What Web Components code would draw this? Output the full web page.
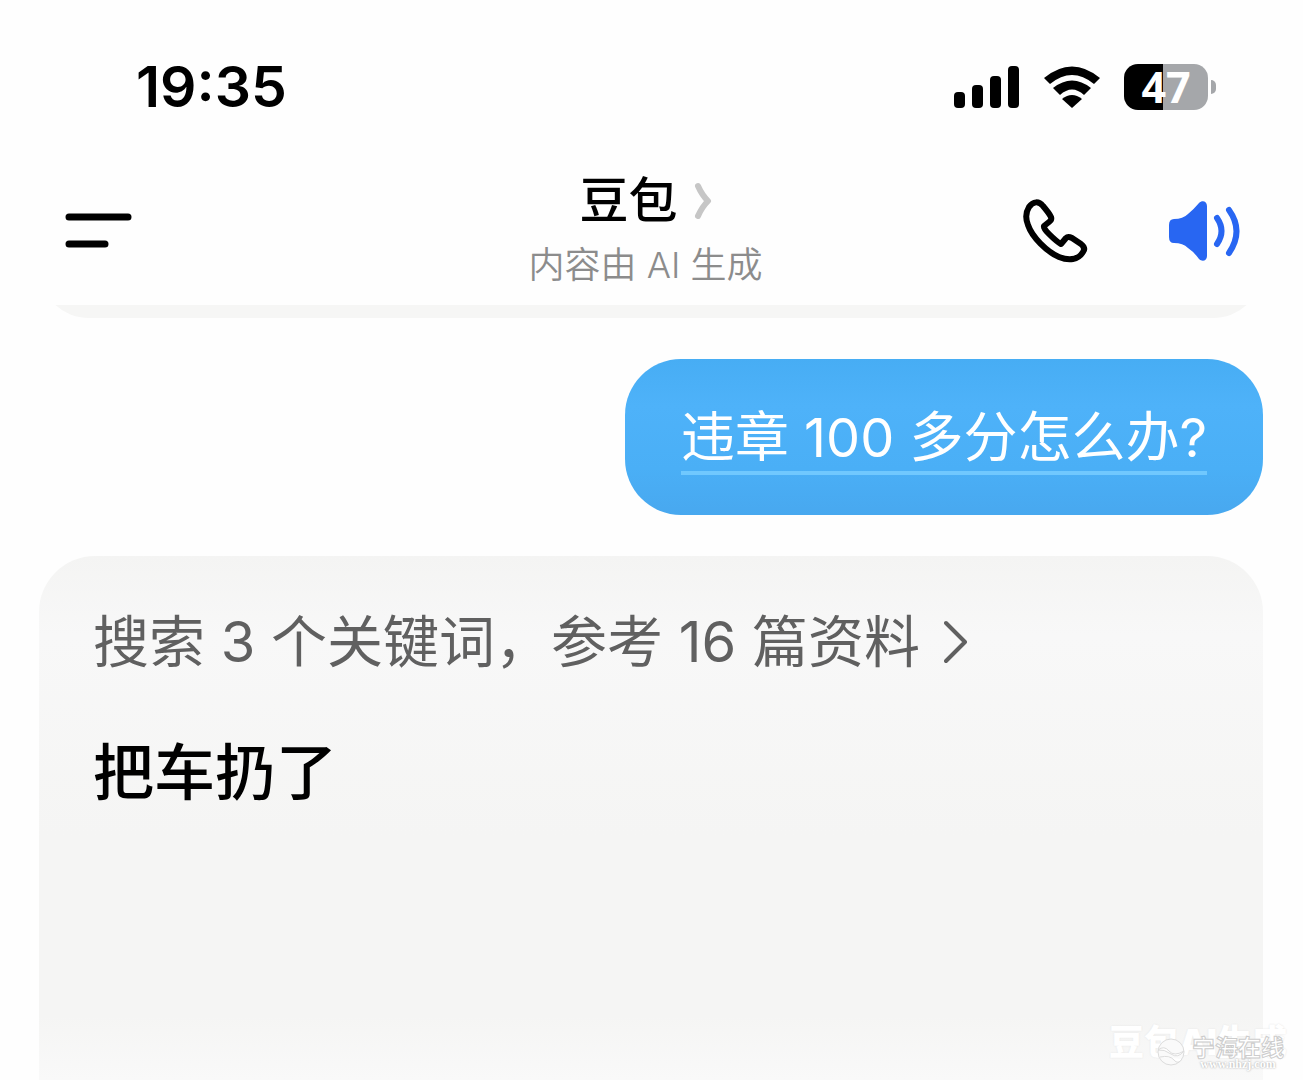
<!DOCTYPE html>
<html lang="zh-CN">
<head>
<meta charset="utf-8">
<meta name="viewport" content="width=device-width, initial-scale=1">
<title>豆包</title>
<style>
  body {
    margin: 0;
    background: #fefefe;
    color: #000;
    font-family: Inter, 'Noto Sans CJK SC', sans-serif;
  }
</style>
</head>
<body>
<chat-app>
  <status-bar slot="top" time="19:35" battery="47"></status-bar>
  <chat-header slot="top">
    豆包
    <span slot="note">内容由 AI 生成</span>
  </chat-header>
  <previous-message></previous-message>
  <user-message>违章 100 多分怎么办?</user-message>
  <bot-message>
    <a slot="sources" href="#sources">搜索 3 个关键词，参考 16 篇资料</a>
    把车扔了
  </bot-message>
  <water-mark slot="overlay">豆包AI生成</water-mark>
</chat-app>

<script>
const define = (name, html) => {
  const template = document.createElement('template');
  template.innerHTML = html;

  customElements.define(name, class extends HTMLElement {
    connectedCallback() {
      const shadowRoot = this.attachShadow({ mode: 'open' });
      shadowRoot.appendChild(template.content.cloneNode(true));
      shadowRoot.querySelectorAll('[data-attr]').forEach((el) => {
        el.textContent = this.getAttribute(el.dataset.attr);
      });
    }
  });
};

define('chat-app', `
  <style>
    :host {
      display: flex;
      flex-direction: column;
      min-height: 100vh;
      position: relative;
      overflow: hidden;
    }

    main {
      flex: 1;
      display: flex;
      flex-direction: column;
      gap: 41px;
      padding: 0 40px 0 39px;
    }
  </style>
  <slot name="top"></slot>
  <main><slot></slot></main>
  <slot name="overlay"></slot>
`);

define('status-bar', `
  <style>
    :host {
      display: flex;
      align-items: center;
      justify-content: space-between;
      height: 64px;
      padding: 55px 87px 41px 136px;
    }

    time {
      font-size: 57px;
      line-height: 64px;
      font-weight: 600;
    }

    .icons {
      display: flex;
      align-items: center;
      gap: 24px;
    }

    svg {
      display: block;
    }

    .battery {
      display: flex;
      align-items: center;
      gap: 3px;
    }

    .level {
      width: 84px;
      height: 46px;
      border-radius: 14px;
      background: linear-gradient(90deg, #000 47%, #a5a7aa 47%);
      color: #fff;
      font: 700 43px/46px 'Open Sans', sans-serif;
      text-align: center;
    }

    .cap {
      width: 5px;
      height: 14px;
      border-radius: 0 7px 7px 0;
      background: #a5a7aa;
    }
  </style>
  <time data-attr="time"></time>
  <div class="icons">
    <svg width="66" height="42" viewBox="0 0 66 42">
      <rect x="0" y="26" width="11" height="16" rx="4"/>
      <rect x="18" y="19" width="11" height="23" rx="4"/>
      <rect x="36" y="10" width="11" height="32" rx="4"/>
      <rect x="54" y="0" width="11" height="42" rx="4"/>
    </svg>
    <svg width="56" height="42" viewBox="0 0 56 42">
      <path d="M0 12Q28-11 56 12L50 18Q28 0 6 18Z"/>
      <path d="M9 22Q28 7 47 22L40 29Q28 18 16 29Z"/>
      <path d="M18 33Q28 25 38 33L28 42Z"/>
    </svg>
    <div class="battery">
      <div class="level" data-attr="battery"></div>
      <div class="cap"></div>
    </div>
  </div>
`);

define('chat-header', `
  <style>
    :host {
      display: grid;
      grid-template-columns: 1fr auto 1fr;
      align-items: center;
      padding: 11px 63px 14px 65px;
      height: 120px;
    }

    button {
      border: 0;
      padding: 0;
      background: none;
      color: inherit;
      font: inherit;
      cursor: pointer;
    }

    svg {
      display: block;
    }

    .menu {
      justify-self: start;
    }

    .name {
      display: flex;
      align-items: center;
      gap: 16px;
      font-size: 49px;
      line-height: 60px;
      font-weight: 500;
    }

    .center {
      display: flex;
      flex-direction: column;
      align-items: center;
      gap: 8px;
      padding-right: 14px;
    }

    .note {
      color: #8c8c8c;
      font-size: 36px;
      line-height: 52px;
      font-weight: 350;
    }

    .actions {
      justify-self: end;
      display: flex;
      align-items: center;
      gap: 80px;
    }
  </style>
  <button class="menu" aria-label="菜单">
    <svg width="67" height="36" viewBox="0 0 67 36" stroke="#000" stroke-width="7" stroke-linecap="round">
      <path d="M4 4H63M4 31H40"/>
    </svg>
  </button>
  <div class="center">
    <button class="name">
      <slot></slot>
      <svg width="18" height="38" viewBox="0 0 18 38" fill="none" stroke="#c6c6c6" stroke-width="6" stroke-linecap="round" stroke-linejoin="round">
        <path d="M4 4Q8 13 14 19Q8 25 4 34"/>
      </svg>
    </button>
    <span class="note"><slot name="note"></slot></span>
  </div>
  <div class="actions">
    <button aria-label="语音通话">
      <svg width="65" height="64" viewBox="0 0 65 64" fill="none" stroke="#000" stroke-width="6" stroke-linejoin="round">
        <path d="M6 8C10 2 16 2 20 7Q26 14 28 18Q29 21 26 23L21 27Q20 29 26 35Q34 43 38 45L43 39Q45 37 49 39L58 45Q63 49 60 53C55 61 46 62 36 58C24 53 9 38 5 26Q1 16 6 8Z"/>
      </svg>
    </button>
    <button aria-label="朗读">
      <svg width="72" height="60" viewBox="0 0 72 60">
        <path fill="#2866f2" d="M6 18Q15 18 20 13Q26 8 31 2C34-1 39 0 39 5V55C39 60 34 61 31 58Q26 51 20 47Q15 42 6 42Q1 42 1 36V24Q1 18 6 18Z"/>
        <path fill="none" stroke="#2866f2" stroke-width="6" stroke-linecap="round" d="M49 17Q58 30 49 43M61 9Q76 30 61 52"/>
      </svg>
    </button>
  </div>
`);

// tail of the earlier reply that has scrolled under the header
define('previous-message', `
  <style>
    :host {
      display: flex;
      align-items: flex-end;
      height: 13px;
      overflow: hidden;
    }

    div {
      flex: 1;
      height: 160px;
      border-radius: 50px;
      background: #f6f6f5;
    }
  </style>
  <div></div>
`);

define('user-message', `
  <style>
    :host {
      align-self: flex-end;
      padding: 40px 56px;
      border-radius: 56px;
      background: linear-gradient(#47adf4, #4eb2f9 30%, #4aaff6 70%, #48a8ef);
      color: #fff;
    }

    p {
      margin: 0;
      padding-top: 6px;
      border-bottom: 4px solid #70c8fe;
      font-size: 54px;
      line-height: 66px;
    }
  </style>
  <p><slot></slot></p>
`);

define('bot-message', `
  <style>
    :host {
      flex: 1;
      padding: 50px 54px;
      border-radius: 56px 56px 0 0;
      background: linear-gradient(#f4f4f3, #f8f8f8 80px, #f5f5f4 280px, #f5f5f4 460px, #f9f9f9);
    }

    .sources {
      display: flex;
      align-items: center;
      gap: 24px;
      color: #606060;
      font-size: 56px;
      line-height: 72px;
    }

    ::slotted(a) {
      color: inherit;
      text-decoration: none;
    }

    p {
      margin: 50px 0 0;
      font-size: 61px;
      line-height: 90px;
      font-weight: 500;
    }
  </style>
  <div class="sources">
    <slot name="sources"></slot>
    <svg width="24" height="44" viewBox="0 0 24 44" fill="none" stroke="#606060" stroke-width="4" stroke-linecap="round" stroke-linejoin="round">
      <path d="M2 3L21 22L2 41"/>
    </svg>
  </div>
  <p><slot></slot></p>
`);

define('water-mark', `
  <style>
    :host {
      position: absolute;
      right: 16px;
      bottom: 10px;
      color: #fff;
      font-size: 35px;
      line-height: 56px;
      font-weight: 900;
      text-shadow: 0 0 2px #e4e4e4;
      white-space: nowrap;
    }

    .site {
      position: absolute;
      right: 3px;
      bottom: 0;
      display: flex;
      align-items: center;
      gap: 6px;
      text-shadow: none;
      -webkit-text-stroke: 1px #ccc;
    }

    .words {
      display: grid;
      text-align: center;
      font: 700 23px/24px 'Noto Sans CJK SC', sans-serif;
    }

    small {
      font: 700 12px/12px 'Liberation Serif', serif;
      text-shadow: 0 0 2px #999;
      -webkit-text-stroke: 0;
    }
  </style>
  <slot></slot>
  <div class="site">
    <svg width="30" height="30" viewBox="0 0 30 30" fill="none" stroke="#dcdcdc" stroke-width="1">
      <circle cx="15" cy="15" r="13" fill="#fafafa"/>
      <path fill="#fff" d="M2 13Q8 8 13 14T28 14Q22 22 15 17T2 13ZM4 20Q14 18 18 23T26 22"/>
    </svg>
    <div class="words">宁海在线<small>www.nhzj.com</small></div>
  </div>
`);
</script>
</body>
</html>
